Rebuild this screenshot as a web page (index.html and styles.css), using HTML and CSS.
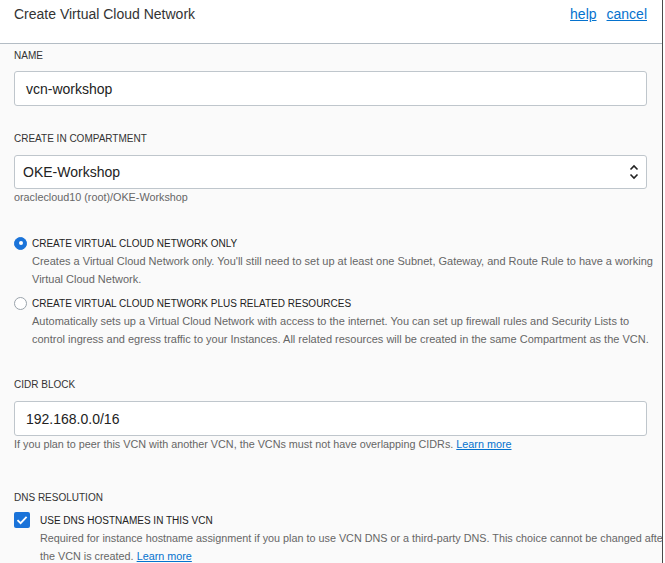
FILE: index.html
```html
<!DOCTYPE html>
<html>
<head>
<meta charset="utf-8">
<link rel="stylesheet" href="styles.css">
</head>
<body>
<div class="panel">
  <header class="header">
    <h1 class="title">Create Virtual Cloud Network</h1>
    <nav class="links"><a href="#">help</a><a href="#">cancel</a></nav>
  </header>
  <main class="form">
    <div class="field">
      <div class="label">NAME</div>
      <div class="input">vcn-workshop</div>
    </div>
    <div class="field f-comp">
      <div class="label">CREATE IN COMPARTMENT</div>
      <div class="input select">
        <span>OKE-Workshop</span>
        <svg class="arrows" width="10" height="16" viewBox="0 0 10 16"><path d="M1.5 5.5 L5 2 L8.5 5.5" fill="none" stroke="#222" stroke-width="1.6"/><path d="M1.5 10.5 L5 14 L8.5 10.5" fill="none" stroke="#222" stroke-width="1.6"/></svg>
      </div>
      <div class="help">oraclecloud10 (root)/OKE-Workshop</div>
    </div>
    <div class="option o-first">
      <div class="opt-row"><span class="radio on"></span><span class="opt-label">CREATE VIRTUAL CLOUD NETWORK ONLY</span></div>
      <p class="desc">Creates a Virtual Cloud Network only. You'll still need to set up at least one Subnet, Gateway, and Route Rule to have a working Virtual Cloud Network.</p>
    </div>
    <div class="option o-second">
      <div class="opt-row"><span class="radio"></span><span class="opt-label">CREATE VIRTUAL CLOUD NETWORK PLUS RELATED RESOURCES</span></div>
      <p class="desc">Automatically sets up a Virtual Cloud Network with access to the internet. You can set up firewall rules and Security Lists to control ingress and egress traffic to your Instances. All related resources will be created in the same Compartment as the VCN.</p>
    </div>
    <div class="field f-cidr">
      <div class="label">CIDR BLOCK</div>
      <div class="input">192.168.0.0/16</div>
      <div class="help">If you plan to peer this VCN with another VCN, the VCNs must not have overlapping CIDRs. <a href="#">Learn more</a></div>
    </div>
    <div class="field f-dns">
      <div class="label">DNS RESOLUTION</div>
      <div class="check-row">
        <span class="checkbox"><svg width="16" height="16" viewBox="0 0 16 16"><path d="M3.5 8.2 L6.6 11.2 L12.6 4.8" fill="none" stroke="#fff" stroke-width="1.8"/></svg></span>
        <span class="opt-label">USE DNS HOSTNAMES IN THIS VCN</span>
      </div>
      <p class="desc dns-desc">Required for instance hostname assignment if you plan to use VCN DNS or a third-party DNS. This choice cannot be changed after the VCN is created. <a href="#">Learn more</a></p>
    </div>
  </main>
</div>
</body>
</html>
```
FILE: styles.css
```css
html, body {
  margin: 0;
  padding: 0;
  background: #ffffff;
  font-family: "Liberation Sans", Arial, sans-serif;
  color: #333333;
}
.panel {
  width: 662px;
  height: 563px;
  overflow: hidden;
  background: #fafafa;
  border-right: 1px solid #4a4a4a;
}
.header {
  height: 44px;
  box-sizing: border-box;
  background: #ffffff;
  border-bottom: 1px solid #b3bcc4;
  display: flex;
  align-items: flex-start;
  justify-content: space-between;
  padding: 6px 15px 0 14px;
}
.title {
  margin: 0;
  font-size: 14px;
  line-height: 16px;
  font-weight: normal;
  color: #333333;
}
.links {
  display: flex;
  gap: 10px;
  line-height: 16px;
}
.links a {
  font-size: 14px;
  color: #0572ce;
  text-decoration: underline;
}
.form {
  padding: 5px 15px 0 14px;
}
.label {
  font-size: 10px;
  line-height: 14px;
  color: #333333;
  text-transform: uppercase;
}
.input {
  margin-top: 8px;
  height: 35px;
  box-sizing: border-box;
  border: 1px solid #bfc6cc;
  border-radius: 3px;
  background: #ffffff;
  display: flex;
  align-items: center;
  padding-left: 11px;
  font-size: 14px;
  color: #222222;
}
.f-comp { margin-top: 26px; }
.f-comp .input { margin-top: 9px; height: 34px; }
.f-cidr .input { margin-top: 9px; }
.select {
  padding-left: 8px;
  padding-right: 7px;
  justify-content: space-between;
}
.arrows { display: block; }
.help {
  margin-top: 1px;
  font-size: 10.8px;
  line-height: 14px;
  color: #666666;
}
.help a, .desc a {
  color: #0572ce;
  text-decoration: underline;
}
.option.o-first { margin-top: 30px; }
.option.o-second { margin-top: 6px; }
.opt-row {
  display: flex;
  align-items: center;
  height: 18px;
}
.radio {
  width: 13px;
  height: 13px;
  box-sizing: border-box;
  border-radius: 50%;
  border: 1px solid #9aa3ab;
  background: #ffffff;
  margin-right: 5px;
  position: relative;
  flex: none;
}
.radio.on {
  background: #1a73d9;
  border-color: #1a73d9;
}
.radio.on::after {
  content: "";
  position: absolute;
  left: 3.5px;
  top: 3.5px;
  width: 4px;
  height: 4px;
  border-radius: 50%;
  background: #ffffff;
}
.opt-label {
  font-size: 10px;
  color: #222222;
}
.desc {
  margin: 0 -12px 0 18px;
  font-size: 11px;
  line-height: 18px;
  color: #666666;
}
.f-cidr { margin-top: 30px; }
.f-dns { margin-top: 40px; }
.check-row {
  margin-top: 6px;
  display: flex;
  align-items: center;
  height: 18px;
}
.checkbox {
  width: 16px;
  height: 16px;
  border-radius: 2px;
  background: #1a73d9;
  margin-right: 10px;
  flex: none;
  display: flex;
}
.dns-desc {
  margin-left: 26px;
  margin-right: 0;
  font-size: 10.8px;
  width: 636px;
}
```
